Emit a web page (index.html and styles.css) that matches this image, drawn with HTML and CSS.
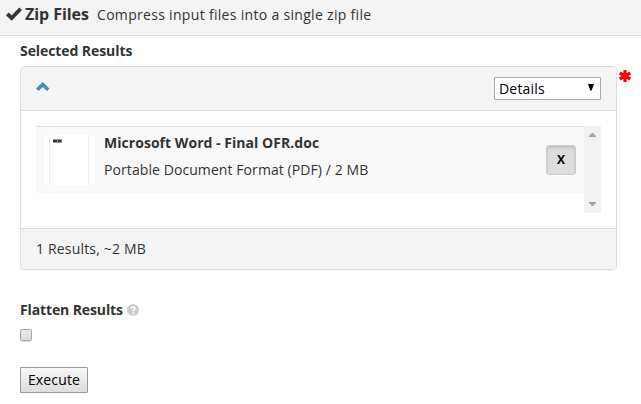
FILE: index.html
```html
<!DOCTYPE html>
<html lang="en">
<head>
<meta charset="utf-8">
<title>Zip Files</title>
<link rel="stylesheet" href="styles.css">
</head>
<body>
<header class="topbar">
  <svg class="check" width="16" height="14" viewBox="0 0 16 14"><path d="M0 8.3 2.6 5.6 5.6 8.5 13.3.6 16 3.1 5.7 13.7Z"/></svg>
  <h1 class="title">Zip Files</h1>
  <span class="subtitle">Compress input files into a single zip file</span>
</header>
<main class="form">
  <div class="label">Selected Results</div>
  <div class="field">
    <section class="panel">
      <div class="panel-head">
        <svg class="chevron" width="14" height="10" viewBox="0 0 14 10"><path d="M6.7 0 13.4 6.4 10.8 9 6.7 5 2.6 9 0 6.4Z"/></svg>
        <div class="select"><span>Details</span><svg width="6" height="7" viewBox="0 0 6 7"><path d="M0 0H6L3.6 6.5H2.4Z"/></svg></div>
      </div>
      <div class="panel-body">
        <div class="list">
          <div class="row">
            <div class="thumb"><div class="page"><svg width="9" height="4" viewBox="0 0 9 4"><path fill="#999" d="M0 0H9V4H0Z"/><path fill="#333" d="M0 1H4V3H0ZM5 1H8V3H5Z"/></svg></div></div>
            <div class="info">
              <div class="name">Microsoft Word - Final OFR.doc</div>
              <div class="meta">Portable Document Format (PDF) / 2 MB</div>
            </div>
            <button class="remove">X</button>
          </div>
          <div class="scrollbar">
            <svg width="7" height="4" viewBox="0 0 7 4"><path d="M0 4V3L3 0H4L7 3V4Z"/></svg>
            <svg width="7" height="4" viewBox="0 0 7 4"><path d="M0 0V1L3 4H4L7 1V0Z"/></svg>
          </div>
        </div>
      </div>
      <div class="panel-foot"><span>1 Results, ~2 MB</span></div>
    </section>
    <svg class="required" width="12" height="12" viewBox="0 0 12 12"><path d="M6 0V12M.7 3 11.3 9M11.3 3 .7 9"/></svg>
  </div>
  <div class="label flatten"><span>Flatten Results</span><svg width="12" height="12" viewBox="0 0 12 12"><circle cx="6" cy="6" r="6" fill="#ccc"/><path d="M4 4.6C4 2.4 8 2.4 8 4.5 8 5.8 6.1 5.8 6.1 7.2M6.1 8.2V9.7" fill="none" stroke="#fff" stroke-width="1.6"/></svg></div>
  <div class="checkbox"></div>
  <button class="execute">Execute</button>
</main>
</body>
</html>
```
FILE: styles.css
```css
* { box-sizing: border-box; }
body {
  margin: 0;
  background: #fff;
  color: #333;
  font: 14px/20px "Open Sans", sans-serif;
  white-space: nowrap;
}
svg { display: block; flex: none; }
.topbar {
  display: flex;
  height: 36px;
  padding: 4px 0 0 6px;
  background: #f4f4f4;
  border-bottom: 1px solid #ddd;
}
.check { margin-top: 3px; fill: #333; }
.title { margin: 0 0 0 3px; width: 72px; font-size: 16px; line-height: 20px; font-weight: 700; letter-spacing: -.06px; }
.subtitle { line-height: 22px; letter-spacing: .31px; }
.form { padding: 5px 0 0 20px; }
.label { height: 20px; font-weight: 700; letter-spacing: -.08px; }
.field { display: flex; margin-top: 5px; }
.panel {
  width: 597px;
  height: 204px;
  border: 1px solid #ddd;
  border-radius: 4px;
  box-shadow: 0 1px 1px rgba(0, 0, 0, .05);
  overflow: hidden;
}
.panel-head {
  display: flex;
  justify-content: space-between;
  height: 44px;
  padding: 10px 15px;
  background: #f4f4f4;
  border-bottom: 1px solid #ddd;
}
.chevron { margin-top: 5px; fill: #428bca; }
.select {
  display: flex;
  justify-content: space-between;
  align-items: center;
  width: 107px;
  height: 23px;
  padding: 1px 6px 0 4px;
  background: #fff;
  border: 1px solid #a9a9a9;
  border-radius: 1px;
  color: #000;
  letter-spacing: .2px;
}
.select svg { margin-top: -4px; }
.panel-body { height: 117px; padding: 15px; }
.list { display: flex; height: 87px; }
.row {
  display: flex;
  width: 548px;
  height: 67px;
  padding: 8px;
  background: #f9f9f9;
  border-top: 1px solid #ddd;
}
.thumb { width: 50px; height: 50px; padding-left: 5px; background: #fff; }
.page { width: 40px; height: 50px; padding: 4px 0 0 3px; border: solid #eee; border-width: 0 1px; }
.info { flex: 1; margin-left: 10px; }
.name { font-weight: 700; line-height: 20px; margin-top: -2px; letter-spacing: .04px; }
.meta { margin-top: 7px; letter-spacing: .08px; }
.remove {
  width: 30px;
  height: 30px;
  margin-top: 10px;
  padding: 0;
  border: 1px solid #ccc;
  border-radius: 3px;
  background: #ddd;
  box-shadow: inset 0 2px 3px rgba(0, 0, 0, .13);
  color: #000;
  font: 700 12px/18px "Open Sans", sans-serif;
}
.scrollbar {
  display: flex;
  flex-direction: column;
  align-items: center;
  justify-content: space-between;
  width: 17px;
  padding: 7px 0;
  background: #f1f1f1;
  fill: #a3a3a3;
}
.panel-foot { height: 41px; padding: 10px 15px; background: #f4f4f4; border-top: 1px solid #ddd; letter-spacing: .18px; }
.required { margin: 4px 0 0 2px; stroke: red; stroke-width: 3.2; }
.flatten { display: flex; align-items: center; gap: 4px; margin-top: 30px; letter-spacing: -.12px; }
.checkbox {
  width: 12px;
  height: 12px;
  margin-top: 9px;
  border: 1px solid #a9a9a9;
  border-radius: 2px;
  background: linear-gradient(#e8e8e8, #ddd);
  box-shadow: 0 1px 1px rgba(0, 0, 0, .1);
}
.execute {
  display: block;
  width: 68px;
  height: 26px;
  margin-top: 26px;
  padding: 0 0 1px;
  border: 1px solid #999;
  border-radius: 1px;
  background: linear-gradient(#f6f6f6, #ddd);
  color: #000;
  font: 14px/20px "Open Sans", sans-serif;
  letter-spacing: .15px;
}
```
